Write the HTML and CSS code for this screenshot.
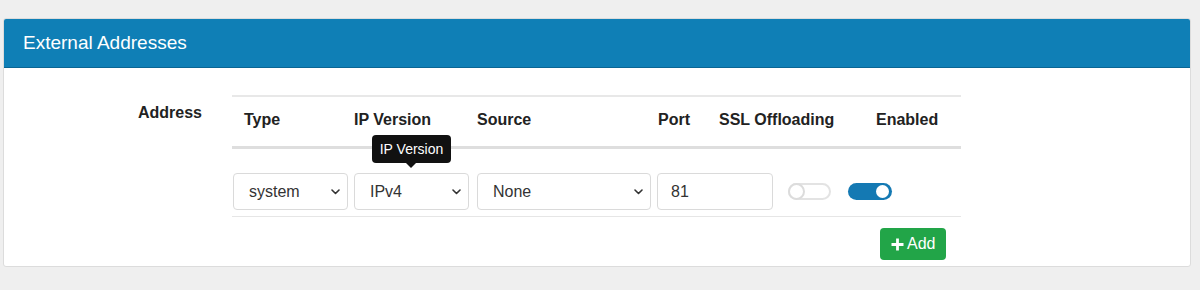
FILE: index.html
```html
<!DOCTYPE html>
<html>
<head>
<meta charset="utf-8">
<link rel="stylesheet" href="styles.css">
</head>
<body>
<div class="panel">
  <div class="panel-heading">External Addresses</div>
  <div class="panel-body">
    <div class="form-row">
      <div class="label">Address</div>
      <div class="table">
        <div class="thead">
          <div class="th th-type">Type</div>
          <div class="th th-ipv">IP Version</div>
          <div class="th th-src">Source</div>
          <div class="th th-port">Port</div>
          <div class="th th-ssl">SSL Offloading</div>
          <div class="th th-en">Enabled</div>
        </div>
        <div class="trow">
          <div class="select sel-type"><span>system</span>
            <svg class="chev" width="9" height="6" viewBox="0 0 9 6"><path d="M1 1 L4.5 4.5 L8 1" fill="none" stroke="#333" stroke-width="1.6" stroke-linecap="round" stroke-linejoin="round"/></svg></div>
          <div class="select sel-ipv"><span>IPv4</span>
            <svg class="chev" width="9" height="6" viewBox="0 0 9 6"><path d="M1 1 L4.5 4.5 L8 1" fill="none" stroke="#333" stroke-width="1.6" stroke-linecap="round" stroke-linejoin="round"/></svg></div>
          <div class="select sel-src"><span>None</span>
            <svg class="chev" width="9" height="6" viewBox="0 0 9 6"><path d="M1 1 L4.5 4.5 L8 1" fill="none" stroke="#333" stroke-width="1.6" stroke-linecap="round" stroke-linejoin="round"/></svg></div>
          <div class="input">81</div>
          <div class="toggle toggle-off"><span class="knob"></span></div>
          <div class="toggle toggle-on"><span class="knob"></span></div>
        </div>
        <div class="actions">
          <button class="btn-add"><svg width="13" height="13" viewBox="0 0 13 13"><path d="M6.5 0.5 V12.5 M0.5 6.5 H12.5" stroke="#fff" stroke-width="2.8"/></svg>Add</button>
        </div>
        <div class="tooltip">IP Version<span class="arrow"></span></div>
      </div>
    </div>
  </div>
</div>
</body>
</html>
```
FILE: styles.css
```css
* { box-sizing: border-box; }
html, body { margin: 0; padding: 0; }
body {
  background: #efefef;
  font-family: "Liberation Sans", Arial, sans-serif;
  color: #222;
  width: 1200px;
  height: 290px;
  overflow: hidden;
}
.panel {
  margin: 18px 0 0 3px;
  width: 1188px;
  background: #fff;
  border: 1px solid #dcdcdc;
  border-radius: 3px;
}
.panel-heading {
  height: 49px;
  background: #0f7fb6;
  border-bottom: 1px solid #0a6593;
  color: #fff;
  font-size: 19px;
  line-height: 48px;
  padding-left: 19px;
  border-radius: 2px 2px 0 0;
}
.panel-body {
  padding: 27px 0 6px 0;
}
.form-row {
  display: flex;
}
.label {
  width: 198px;
  margin-right: 30px;
  text-align: right;
  font-weight: bold;
  font-size: 16px;
  line-height: 22px;
  padding-top: 7px;
  color: #222;
}
.table {
  position: relative;
  width: 729px;
}
.thead {
  display: flex;
  border-top: 2px solid #e8e8e8;
  border-bottom: 3px solid #dedede;
  padding: 12px 0 15px 0;
  font-weight: bold;
  font-size: 16px;
  line-height: 22px;
}
.th { flex: none; }
.th-type { width: 122px; padding-left: 12px; }
.th-ipv { width: 123px; }
.th-src { width: 181px; }
.th-port { width: 61px; }
.th-ssl { width: 157px; }
.th-en { width: 85px; }
.trow {
  display: flex;
  align-items: center;
  padding: 24px 0 6px 1px;
  border-bottom: 1px solid #e6e6e6;
}
.select, .input {
  flex: none;
  height: 37px;
  border: 1px solid #dadada;
  border-radius: 4px;
  font-size: 16px;
  color: #333;
  display: flex;
  align-items: center;
  justify-content: space-between;
  padding: 0 7px 0 15px;
}
.sel-type { width: 115px; margin-right: 6px; }
.sel-ipv { width: 115px; margin-right: 8px; }
.sel-src { width: 174px; margin-right: 6px; }
.input { width: 116px; padding-left: 13px; margin-right: 15px; }
.chev { display: block; }
.toggle {
  flex: none;
  position: relative;
  height: 17px;
  border-radius: 9px;
}
.toggle-off {
  width: 43px;
  border: 2px solid #e3e3e3;
  background: #fff;
  margin-right: 17px;
}
.toggle-off .knob {
  position: absolute;
  left: -2px;
  top: -2px;
  width: 17px;
  height: 17px;
  border-radius: 50%;
  border: 2px solid #dcdcdc;
  background: #fff;
}
.toggle-on {
  width: 44px;
  background: #1479b3;
}
.toggle-on .knob {
  position: absolute;
  right: 3px;
  top: 2px;
  width: 13px;
  height: 13px;
  border-radius: 50%;
  background: #fff;
}
.actions {
  display: flex;
  justify-content: flex-end;
  padding: 11px 15px 0 0;
}
.btn-add {
  display: flex;
  align-items: center;
  gap: 3px;
  height: 32px;
  width: 66px;
  padding: 0 0 0 11px;
  background: #22a548;
  border: none;
  border-radius: 4px;
  color: #fff;
  font-family: "Liberation Sans", Arial, sans-serif;
  font-size: 16px;
}
.tooltip {
  position: absolute;
  left: 140px;
  top: 40px;
  width: 79px;
  height: 28px;
  background: #111;
  color: #fff;
  border-radius: 4px;
  font-size: 14px;
  line-height: 28px;
  text-align: center;
}
.tooltip .arrow {
  position: absolute;
  left: 34px;
  bottom: -5px;
  width: 0;
  height: 0;
  border-left: 5px solid transparent;
  border-right: 5px solid transparent;
  border-top: 5px solid #111;
}
```
